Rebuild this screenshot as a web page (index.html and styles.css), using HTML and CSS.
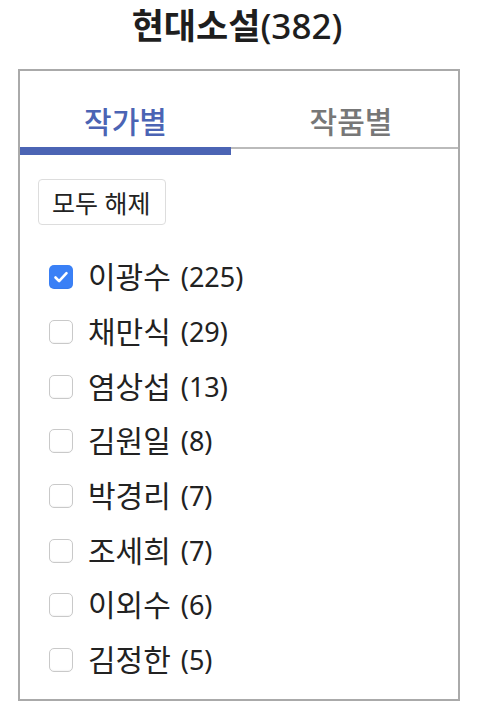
FILE: index.html
```html
<!DOCTYPE html>
<html lang="ko">
<head>
<meta charset="utf-8">
<link rel="stylesheet" href="styles.css">
</head>
<body>
<h1 class="title">현대소설<span class="title-count">(382)</span></h1>
<div class="panel">
  <div class="tabs">
    <div class="tab active">작가별</div>
    <div class="tab tab-right">작품별</div>
  </div>
  <div class="content">
    <button class="clear-btn">모두 해제</button>
    <ul class="list">
      <li class="row"><span class="cb checked"><svg viewBox="0 0 24 24" width="24" height="24"><path d="M6.5 12.5l3.6 3.6 7.4-8" fill="none" stroke="#fff" stroke-width="2.6" stroke-linecap="round" stroke-linejoin="round"/></svg></span><span class="name">이광수</span><span class="count">(225)</span></li>
      <li class="row"><span class="cb"></span><span class="name">채만식</span><span class="count">(29)</span></li>
      <li class="row"><span class="cb"></span><span class="name">염상섭</span><span class="count">(13)</span></li>
      <li class="row"><span class="cb"></span><span class="name">김원일</span><span class="count">(8)</span></li>
      <li class="row"><span class="cb"></span><span class="name">박경리</span><span class="count">(7)</span></li>
      <li class="row"><span class="cb"></span><span class="name">조세희</span><span class="count">(7)</span></li>
      <li class="row"><span class="cb"></span><span class="name">이외수</span><span class="count">(6)</span></li>
      <li class="row"><span class="cb"></span><span class="name">김정한</span><span class="count">(5)</span></li>
      <li class="row"><span class="cb"></span><span class="name">이기영</span><span class="count">(5)</span></li>
    </ul>
  </div>
</div>
</body>
</html>
```
FILE: styles.css
```css
* { box-sizing: border-box; }
body {
  margin: 0;
  background: #fff;
  font-family: "Noto Sans", "Noto Sans CJK KR", sans-serif;
  color: #222;
}
.title {
  margin: 0;
  height: 69px;
  padding: 5px 4px 0 0;
  text-align: center;
  font-size: 35px;
  line-height: 42px;
  font-weight: 700;
  color: #1e1e1e;
}
.title-count {
  font-size: 35px;
  font-weight: 500;
}
.panel {
  margin: 0 18px;
  height: 632px;
  border: 2px solid #aaa;
  overflow: hidden;
}
.tabs {
  display: flex;
  border-bottom: 2px solid #bbb;
}
.tab {
  height: 76px;
  padding-top: 30px;
  line-height: 42px;
  font-size: 30px;
  font-weight: 500;
  text-align: center;
  color: #777;
}
.tab.active {
  width: 211px;
  color: #4b64b4;
  box-sizing: content-box;
  height: 46px;
  border-bottom: 8px solid #4b64b4;
  margin-bottom: -8px;
}
.tab-right {
  flex: 1;
  padding-left: 13px;
}
.content {
  padding: 30px 18px 0;
}
.clear-btn {
  height: 46px;
  padding: 0 14px 0 13px;
  border: 1.5px solid #ddd;
  border-radius: 4px;
  background: #fff;
  font-family: inherit;
  font-size: 25px;
  color: #222;
}
.list {
  list-style: none;
  margin: 25px 0 0;
  padding: 0;
}
.row {
  display: flex;
  align-items: center;
  height: 54.7px;
  padding-left: 11px;
}
.cb {
  width: 24px;
  height: 24px;
  border: 1.5px solid #c9c9c9;
  border-radius: 5px;
  background: #fff;
  margin-right: 15px;
  flex: none;
  box-shadow: inset 0 -1px 1px rgba(0,0,0,0.04);
}
.cb.checked {
  border: none;
  background: #3a80f6;
}
.cb svg { display: block; }
.name {
  font-size: 30px;
  line-height: 34px;
  margin-right: 10px;
}
.count {
  font-size: 27px;
  line-height: 34px;
}
```
